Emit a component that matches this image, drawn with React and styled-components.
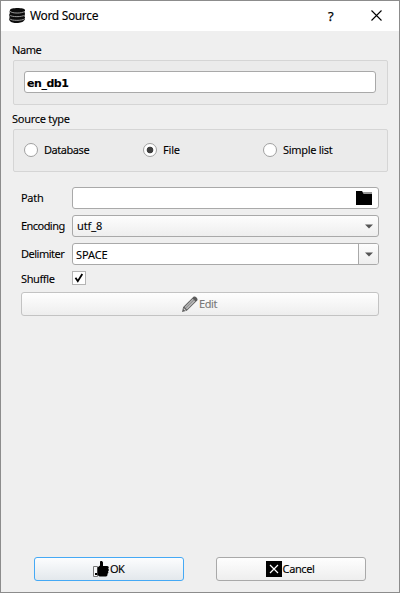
import React from "react";
import styled, { createGlobalStyle, css } from "styled-components";

const Global = createGlobalStyle`
  * { box-sizing: border-box; }
  html, body { margin: 0; padding: 0; }
  body { font-family: "Noto Sans", "Open Sans", sans-serif; font-size: 11px; color: #000; }
  button, input { font: inherit; color: inherit; }
  svg { display: block; flex: none; }
`;

const Window = styled.main`
  width: 400px;
  height: 593px;
  border: 1px solid #8c8c8c;
  background: #efefef;
  display: flex;
  flex-direction: column;
  overflow: hidden;
`;

const TitleBar = styled.header`
  height: 30px;
  flex: none;
  background: #fff;
  display: flex;
  align-items: center;
  padding: 0 17px 2px 7px;
`;

const Text = styled.span`
  display: block;
  white-space: nowrap;
  line-height: 16px;
  letter-spacing: ${(p) => p.$track || 0}px;
  -webkit-text-stroke: 0.1px currentColor;
`;

const Title = styled(Text)`
  flex: 1;
  margin: 2px 0 0 4px;
  font-size: 12px;
`;

const Help = styled(Text)`
  font-size: 13px;
  width: 10px;
  margin: 1px 33px 0 0;
  -webkit-text-stroke-width: 0.25px;
`;

const Body = styled.div`
  flex: 1;
  display: flex;
  flex-direction: column;
  padding: 11px 12px 11px 11px;
`;

const GroupTitle = styled(Text)`
  height: 18px;
`;

const Group = styled.section`
  height: ${(p) => p.$h}px;
  width: 375px;
  margin: 0 0 ${(p) => p.$gap}px 1px;
  border: 1px solid #d5d5d5;
  border-radius: 2px;
  background: #ebebeb;
  padding: 0 11px 1px 10px;
  display: flex;
  align-items: center;
`;

const frame = css`
  height: 22px;
  border: 1px solid #a9a9a9;
  border-radius: 3px;
`;

const Field = styled.div`
  ${frame}
  flex: 1;
  min-width: 0;
  display: flex;
  align-items: center;
  justify-content: space-between;
  background: #fff;
  padding-left: ${(p) => p.$pad || 3}px;
`;

const Select = styled(Field)`
  background: linear-gradient(#fdfdfd, #eeeeee);
`;

const Bold = styled(Text)`
  font-family: "DejaVu Sans", sans-serif;
  font-size: 11px;
  font-weight: 700;
  padding-top: 3px;
`;

const Radio = styled.label`
  display: flex;
  align-items: center;
  gap: 6px;
  width: ${(p) => p.$w}px;
`;

const Dot = styled.i`
  width: 14px;
  height: 14px;
  flex: none;
  border: 1px solid #a0a0a0;
  border-radius: 50%;
  background: ${(p) => (p.$on ? "radial-gradient(circle, #404040 0 2.9px, #fff 3.7px)" : "#fff")};
`;

const Form = styled.div`
  display: flex;
  flex-direction: column;
  width: 358px;
  margin-left: 9px;
`;

const Row = styled.div`
  display: flex;
  align-items: center;
  height: ${(p) => p.$h || 22}px;
  margin-bottom: ${(p) => p.$gap ?? 6}px;
`;

const Label = styled(Text)`
  width: 51px;
  flex: none;
`;

const LowText = styled(Text)`
  padding-top: 2px;
`;

const LowLabel = styled(Label)`
  padding-top: 2px;
`;

const Arrow = styled.span`
  width: 20px;
  height: 20px;
  display: flex;
  align-items: center;
  justify-content: center;
  border-left: 1px solid ${(p) => (p.$split ? "#a9a9a9" : "transparent")};
  border-radius: 0 2px 2px 0;
  background: ${(p) => (p.$split ? "linear-gradient(#fdfdfd, #eeeeee)" : "none")};
`;

const CheckBox = styled.span`
  width: 14px;
  height: 14px;
  border: 1px solid #b4b4b4;
  background: #fff;
`;

const Button = styled.button`
  height: 24px;
  width: ${(p) => p.$w}px;
  padding: 0 ${(p) => p.$shift || 0}px 0 0;
  border: 1px solid ${(p) => p.$line || "#a9a9a9"};
  border-radius: 3px;
  background: linear-gradient(${(p) => p.$fill || "#fefefe, #eeeeee"});
  color: ${(p) => (p.disabled ? "#787878" : "#000")};
  display: flex;
  align-items: center;
  justify-content: center;
  gap: 1px;
`;

const Footer = styled.footer`
  margin-top: auto;
  display: flex;
  gap: 32px;
  padding-left: 22px;
`;

const Database = () => (
  <svg width="18" height="17" viewBox="0 0 18 17">
    <path d="M2 3C2 .2 17 .2 17 3v2l-.6.8.6.7v2.3l-.6.7.6.8v2.5l-1 .8c-1 3-12 3.300-14 .4l-.8-1V10.800L2 10l-.8-.8V7L2 6.200 1.500 5z" fill="#0c0c0c" />
    <path d="M2 4.300c2 2.300 12 2.300 15 0M1.500 8c2 2.200 12.500 2.200 15.500 0M1.500 11.700c2 2.200 12.500 2.200 15.500 0" fill="none" stroke="#aaa" strokeWidth=".9" />
  </svg>
);

const Close = () => (
  <svg width="11" height="11" viewBox="0 0 11 11">
    <path d="M.5.5l10 10M10.500.5l-10 10" stroke="#000" strokeWidth="1.1" />
  </svg>
);

const Folder = () => (
  <svg width="22" height="16" viewBox="0 0 22 16">
    <path d="M0 1h6l2 3h8v11H0z" fill="#000" />
    <path d="M6.500 2H16v2H8z" fill="#999" />
  </svg>
);

const Caret = () => (
  <svg width="8" height="5" viewBox="0 0 8 5">
    <path d="M0 .5h8L4 4.500z" fill="#555" />
  </svg>
);

const Tick = () => (
  <svg width="12" height="12" viewBox="0 0 12 12">
    <path d="M2.500 5.700L4.800 9.200L9.300 2" fill="none" stroke="#000" strokeWidth="1.8" />
  </svg>
);

const Pencil = () => (
  <svg width="16" height="16" viewBox="0 0 16 16">
    <path d="M0 16l1.200-5L11.500.8c1.600-1.500 5.200 2 3.700 3.700L4.800 14.700z" fill="#5c5c5c" />
    <path d="M2.500 11L10.700 2.700l2.600 2.600L5 13.600z" fill="#b8b8b8" />
    <path d="M3.800 11.900l8-8" stroke="#858585" />
    <path d="M1.800 12l2.400 2.400-1 .4-1.700-1.600z" fill="#ddd" />
  </svg>
);

const Thumb = () => (
  <svg width="16" height="16" viewBox="0 0 16 16">
    <path d="M.5 5.500h4v10h-4z" fill="#f3f5f7" stroke="#777" />
    <path d="M2 12h2v2H2z" fill="#000" />
    <path d="M4.500 6.500L7 4.500V1c0-1.500 3-1.300 3 .8V5h4.200c1.700 0 2 2 .9 2.600 1.200.8.9 2.300-.1 2.800.7.8.4 2-.6 2.400.4 1.200-.3 2.700-1.500 2.700H6.500L4.500 14z" fill="#000" />
  </svg>
);

const Cross = () => (
  <svg width="16" height="16" viewBox="0 0 16 16">
    <path d="M0 0h16v16H0z" fill="#000" />
    <path d="M4 4l8 8M12 4l-8 8" stroke="#fff" strokeWidth="1.200" />
  </svg>
);

export default function App() {
  return (
    <>
      <Global />
      <Window>
        <TitleBar>
          <Database />
          <Title $track={-0.35}>Word Source</Title>
          <Help>?</Help>
          <Close />
        </TitleBar>
        <Body>
          <GroupTitle $track={-0.45}>Name</GroupTitle>
          <Group $h={45} $gap={6}>
            <Field $pad={2}><Bold $track={-0.45}>en_db1</Bold></Field>
          </Group>
          <GroupTitle $track={-0.28}>Source type</GroupTitle>
          <Group $h={43} $gap={15}>
            <Radio $w={119}><Dot /><Text $track={-0.45}>Database</Text></Radio>
            <Radio $w={120}><Dot $on /><Text $track={-0.2}>File</Text></Radio>
            <Radio $w={100}><Dot /><Text $track={-0.3}>Simple list</Text></Radio>
          </Group>
          <Form>
            <Row><Label $track={-0.3}>Path</Label><Field><span /><Folder /></Field></Row>
            <Row>
              <Label $track={-0.55}>Encoding</Label>
              <Select $pad={4}><Text $track={-0.1}>utf_8</Text><Arrow><Caret /></Arrow></Select>
            </Row>
            <Row>
              <Label $track={-0.5}>Delimiter</Label>
              <Field><LowText $track={-0.1}>SPACE</LowText><Arrow $split><Caret /></Arrow></Field>
            </Row>
            <Row $h={14} $gap={7}><LowLabel $track={-0.4}>Shuffle</LowLabel><CheckBox><Tick /></CheckBox></Row>
            <Button $w={358} $line="#c3c3c3" $shift={1} disabled><Pencil /><Text $track={-0.4}>Edit</Text></Button>
          </Form>
          <Footer>
            <Button $w={150} $line="#45a9f5" $fill="#fcfdfe, #e3e8ec" $shift={1}><Thumb /><Text $track={-0.6}>OK</Text></Button>
            <Button $w={150} $shift={2}><Cross /><Text $track={-0.4}>Cancel</Text></Button>
          </Footer>
        </Body>
      </Window>
    </>
  );
}
